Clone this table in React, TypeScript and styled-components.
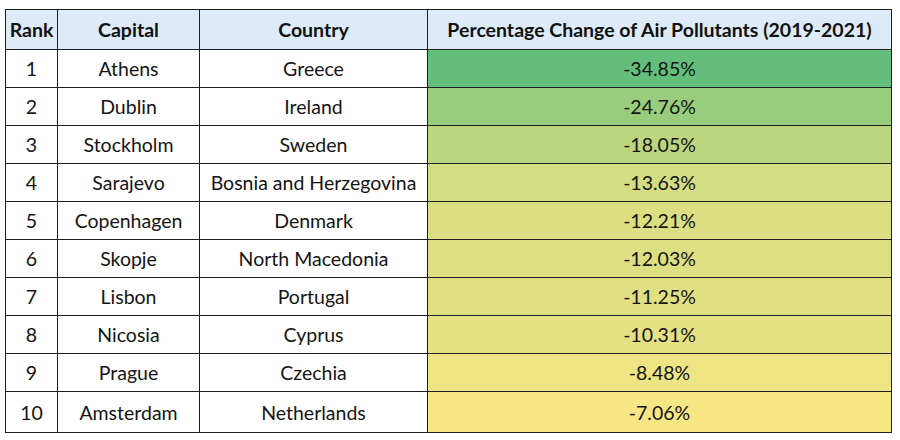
import React from "react";
import styled, { createGlobalStyle } from "styled-components";

const Global = createGlobalStyle`
  html, body { margin: 0; padding: 0; background: #ffffff; }
  body { font-family: Lato, "Open Sans", sans-serif; color: #151515; }
`;

const Page = styled.div`
  padding: 9px 0 0 5px;
  width: 900px;
  height: 440px;
  box-sizing: border-box;
`;

const Table = styled.table`
  border-collapse: collapse;
  width: 886px;
  table-layout: fixed;
  font-size: 19.5px;
`;

const HeadCell = styled.th<{ $w: number }>`
  width: ${(p) => p.$w}px;
  height: 40px;
  padding: 0;
  background: #dcebf7;
  border: 1px solid #1e1e1e;
  font-weight: 700;
  text-align: center;
  vertical-align: middle;
  color: #111;
  box-sizing: border-box;
`;

const Cell = styled.td<{ $last?: boolean }>`
  height: ${(p) => (p.$last ? 41 : 38)}px;
  padding: 0;
  border: 1px solid #1e1e1e;
  text-align: center;
  vertical-align: middle;
  color: #141414;
  box-sizing: border-box;
`;

const ValueCell = styled(Cell)<{ $bg: string }>`
  background: ${(p) => p.$bg};
`;

const rows: [number, string, string, number][] = [
  [1, "Athens", "Greece", -34.85],
  [2, "Dublin", "Ireland", -24.76],
  [3, "Stockholm", "Sweden", -18.05],
  [4, "Sarajevo", "Bosnia and Herzegovina", -13.63],
  [5, "Copenhagen", "Denmark", -12.21],
  [6, "Skopje", "North Macedonia", -12.03],
  [7, "Lisbon", "Portugal", -11.25],
  [8, "Nicosia", "Cyprus", -10.31],
  [9, "Prague", "Czechia", -8.48],
  [10, "Amsterdam", "Netherlands", -7.06],
];

const G = [99, 190, 123];
const Y = [246, 230, 132];
const min = -34.85;
const max = -7.06;

function scale(v: number) {
  const t = (v - min) / (max - min);
  const c = G.map((g, i) => Math.round(g + (Y[i] - g) * t));
  return `rgb(${c[0]}, ${c[1]}, ${c[2]})`;
}

export default function App() {
  return (
    <>
      <Global />
      <Page>
        <Table>
          <thead>
            <tr>
              <HeadCell $w={52}>Rank</HeadCell>
              <HeadCell $w={142}>Capital</HeadCell>
              <HeadCell $w={228}>Country</HeadCell>
              <HeadCell $w={464}>Percentage Change of Air Pollutants (2019-2021)</HeadCell>
            </tr>
          </thead>
          <tbody>
            {rows.map(([rank, cap, country, v], i) => {
              const last = i === rows.length - 1;
              return (
                <tr key={rank}>
                  <Cell $last={last}>{rank}</Cell>
                  <Cell $last={last}>{cap}</Cell>
                  <Cell $last={last}>{country}</Cell>
                  <ValueCell $last={last} $bg={scale(v)}>
                    {v.toFixed(2)}%
                  </ValueCell>
                </tr>
              );
            })}
          </tbody>
        </Table>
      </Page>
    </>
  );
}
